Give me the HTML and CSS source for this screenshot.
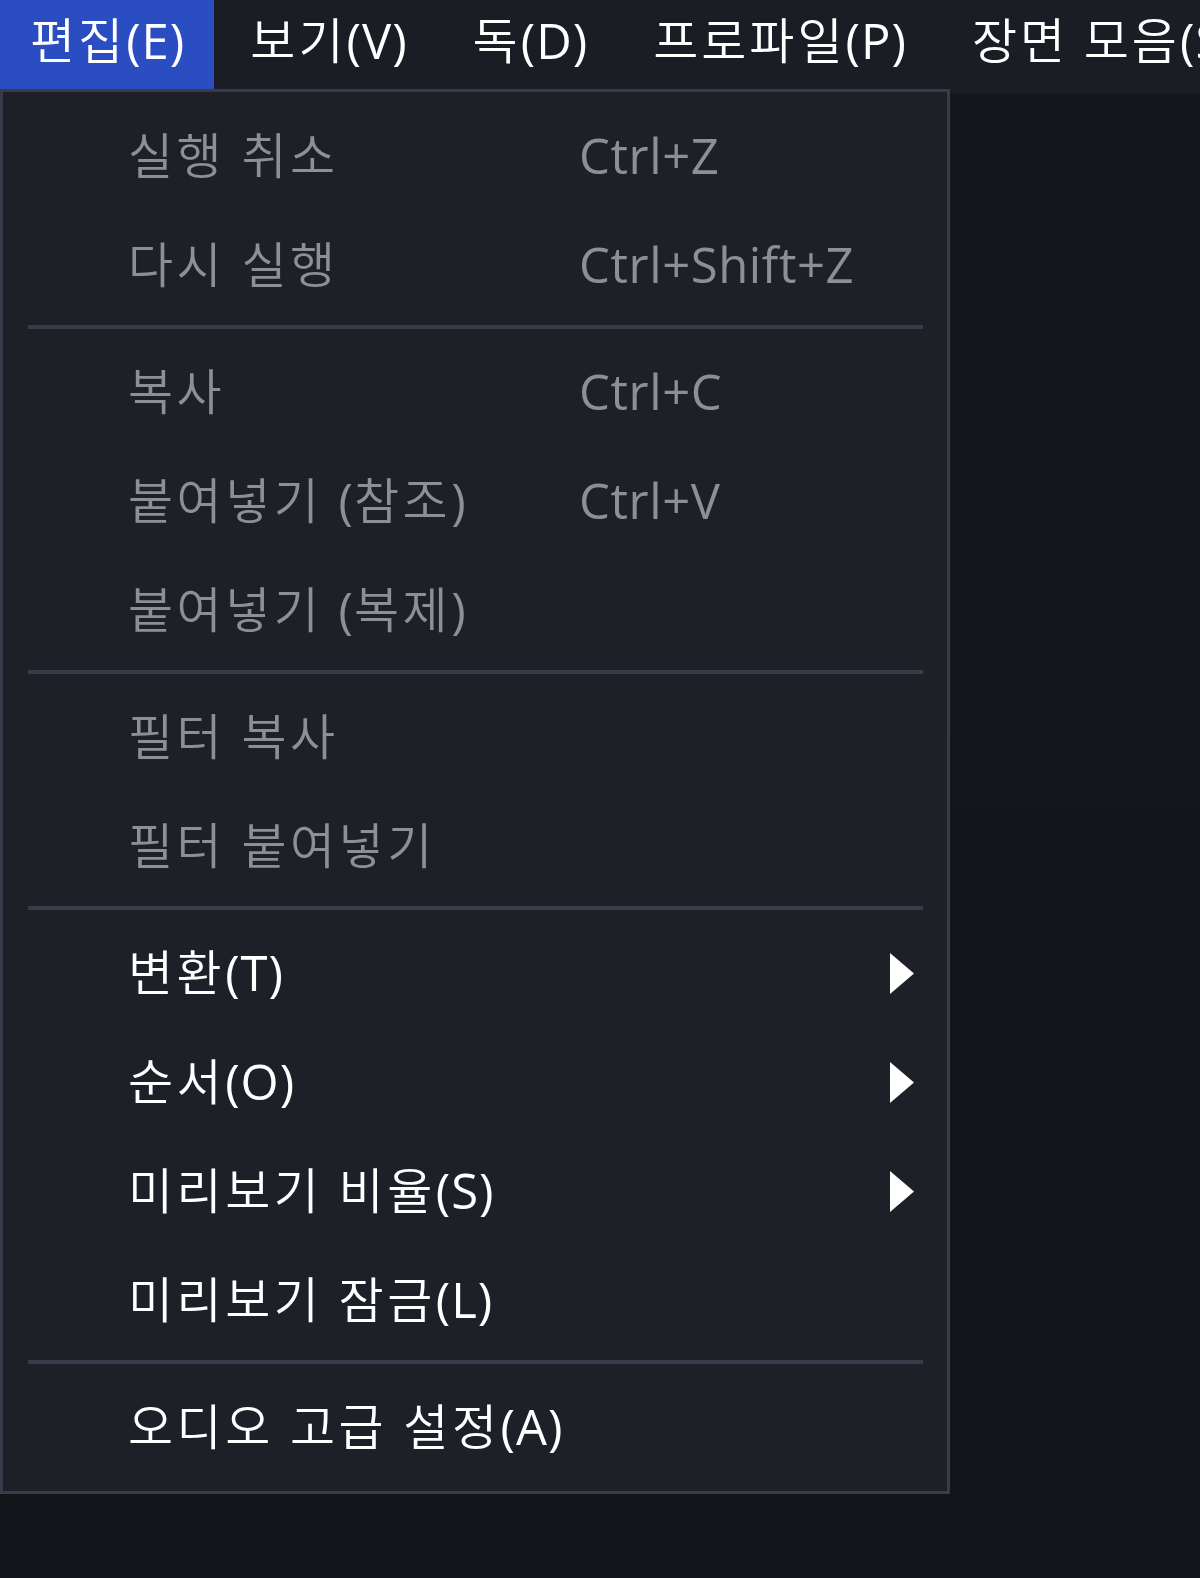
FILE: index.html
```html
<!DOCTYPE html>
<html lang="ko">
<head>
<meta charset="utf-8">
<title>편집 메뉴</title>
<link rel="stylesheet" href="styles.css">
</head>
<body>
<div class="app">
  <nav class="menubar">
    <div class="menubar-item active">편집<span class="lat">(E)</span></div>
    <div class="menubar-item">보기<span class="lat">(V)</span></div>
    <div class="menubar-item">독<span class="lat">(D)</span></div>
    <div class="menubar-item">프로파일<span class="lat">(P)</span></div>
    <div class="menubar-item">장면 모음<span class="lat">(S)</span></div>
  </nav>
  <div class="workspace"></div>
  <div class="dropdown">
    <div class="row disabled"><span class="label">실행 취소</span><span class="shortcut">Ctrl+Z</span></div>
    <div class="row disabled"><span class="label">다시 실행</span><span class="shortcut">Ctrl+Shift+Z</span></div>
    <div class="sep"></div>
    <div class="row disabled"><span class="label">복사</span><span class="shortcut">Ctrl+C</span></div>
    <div class="row disabled"><span class="label">붙여넣기 <span class="lat">(</span>참조<span class="lat">)</span></span><span class="shortcut">Ctrl+V</span></div>
    <div class="row disabled"><span class="label">붙여넣기 <span class="lat">(</span>복제<span class="lat">)</span></span><span class="shortcut"></span></div>
    <div class="sep"></div>
    <div class="row disabled"><span class="label">필터 복사</span><span class="shortcut"></span></div>
    <div class="row disabled"><span class="label">필터 붙여넣기</span><span class="shortcut"></span></div>
    <div class="sep"></div>
    <div class="row"><span class="label">변환<span class="lat">(T)</span></span><span class="shortcut"></span><svg class="arrow" viewBox="0 0 24 41"><polygon points="0,0 24,20.5 0,41" fill="#ffffff"/></svg></div>
    <div class="row"><span class="label">순서<span class="lat">(O)</span></span><span class="shortcut"></span><svg class="arrow" viewBox="0 0 24 41"><polygon points="0,0 24,20.5 0,41" fill="#ffffff"/></svg></div>
    <div class="row"><span class="label">미리보기 비율<span class="lat">(S)</span></span><span class="shortcut"></span><svg class="arrow" viewBox="0 0 24 41"><polygon points="0,0 24,20.5 0,41" fill="#ffffff"/></svg></div>
    <div class="row"><span class="label">미리보기 잠금<span class="lat">(L)</span></span><span class="shortcut"></span></div>
    <div class="sep"></div>
    <div class="row"><span class="label">오디오 고급 설정<span class="lat">(A)</span></span><span class="shortcut"></span></div>
  </div>
</div>
</body>
</html>
```

FILE: styles.css
```css
* {
  box-sizing: border-box;
}

html, body {
  margin: 0;
  padding: 0;
  background: #14161c;
}

body {
  font-family: "Open Sans", "Noto Sans CJK KR", sans-serif;
  font-size: 49px;
  font-weight: 350;
  color: #ffffff;
  width: 1200px;
  height: 1578px;
  overflow: hidden;
}

.app {
  position: relative;
  width: 1200px;
  height: 1578px;
  display: flex;
  flex-direction: column;
}

.menubar {
  height: 94px;
  background: #1b1d24;
  display: flex;
  align-items: flex-start;
  white-space: nowrap;
  overflow: hidden;
}

.menubar-item {
  height: 89px;
  padding: 0 29px 8px 30px;
  display: flex;
  align-items: center;
  color: #ffffff;
  line-height: 1;
  letter-spacing: 3px;
}

.menubar-item + .menubar-item {
  padding-left: 36px;
}

.menubar-item.active {
  background: #2a4dc1;
}

.lat {
  font-weight: 400;
  letter-spacing: 1px;
}

.workspace {
  flex: 1;
  background: linear-gradient(180deg, #15171d 0%, #12141a 100%);
}

.dropdown {
  position: absolute;
  left: 0;
  top: 89px;
  width: 950px;
  height: 1405px;
  background: #1e2028;
  border: 3px solid #393b48;
  padding: 10px 0 9px 0;
  display: flex;
  flex-direction: column;
}

.row {
  height: 109px;
  flex: none;
  display: grid;
  grid-template-columns: 451px 1fr 24px;
  align-items: center;
  padding: 0 33px 0 125px;
  line-height: 1;
  white-space: nowrap;
}

.row.disabled {
  color: #8d8f97;
}

.label {
  letter-spacing: 3.5px;
  padding-bottom: 3px;
}

.shortcut {
  font-weight: 400;
  letter-spacing: 0.6px;
  padding-bottom: 3px;
}

.arrow {
  width: 24px;
  height: 41px;
  display: block;
}

.sep {
  flex: none;
  height: 4px;
  margin: 5px 24px 9px 25px;
  background: #393b48;
}
```
